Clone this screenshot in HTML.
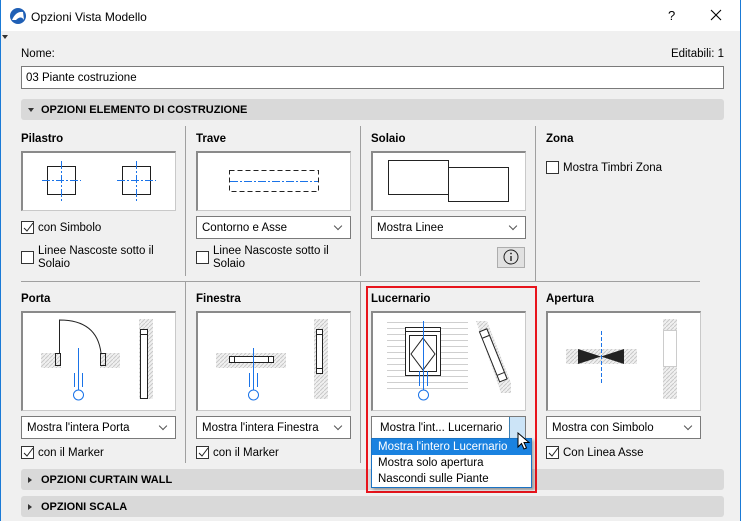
<!DOCTYPE html><html><head><meta charset="utf-8"><style>
*{box-sizing:border-box;margin:0;padding:0}
body{width:741px;height:521px;overflow:hidden;background:#f0f0f0;font-family:"Liberation Sans",sans-serif;font-size:11.5px;color:#000;position:relative}
.a{position:absolute;line-height:16px}
.title{left:0;top:0;width:741px;height:31px;background:#fff}
.bl{left:0;top:0;width:1px;height:521px;background:#1a7ad6}
.br{left:740px;top:0;width:1px;height:521px;background:#1a7ad6}
.sec{left:21px;width:703px;height:21px;background:#d9d9d9;border-radius:3px;font-weight:bold;font-size:11px;padding:3px 0 0 20px}
.sec .t{position:absolute;left:7px;top:8px;width:0;height:0}
.h{font-weight:bold;font-size:11.5px}
.pv{background:#fff;border:1px solid #c9c9c9;border-top:2px solid #8a8a8a;border-left:2px solid #8a8a8a}
.dd{background:#fff;border:1px solid #7a7a7a;height:23px;padding:3px 0 0 5px;font-size:11.5px}
.dd:after{content:"";position:absolute;right:9px;top:6px;width:5px;height:5px;border-right:1px solid #555;border-bottom:1px solid #555;transform:rotate(45deg)}
.cb{width:13px;height:13px;border:1px solid #333;background:#fff}
.vl{width:1px;background:#a0a0a0}
</style></head><body>
<div class="a title"></div>
<svg class="a" style="left:9px;top:7px" width="18" height="18"><circle cx="9" cy="9" r="8" fill="#1f5fb5"/><path d="M3 13 Q7 4 14 5 L15 13 Q12 8 7 13Z" fill="#fff"/></svg>
<div class="a" style="left:31px;top:9px;font-size:12px">Opzioni Vista Modello</div>
<div class="a" style="left:668px;top:8px;font-size:13px">?</div>
<svg class="a" style="left:710px;top:9px" width="12" height="12"><path d="M1 1L11 11M11 1L1 11" stroke="#000" stroke-width="1.1"/></svg>
<div class="a" style="left:2px;top:35px;width:0;height:0;border-left:3px solid transparent;border-right:3px solid transparent;border-top:4px solid #333"></div>
<div class="a bl"></div><div class="a br"></div>

<div class="a" style="left:21px;top:46px">Nome:</div>
<div class="a" style="right:17px;top:46px">Editabili: 1</div>
<div class="a" style="left:21px;top:66px;width:703px;height:23px;background:#fff;border:1px solid #7a7a7a;padding:3px 0 0 4px">03 Piante costruzione</div>

<div class="a sec" style="top:99px"><div class="t" style="border-left:3px solid transparent;border-right:3px solid transparent;border-top:4px solid #333;top:9px"></div>OPZIONI ELEMENTO DI COSTRUZIONE</div>

<div class="a vl" style="left:185px;top:126px;height:150px"></div>
<div class="a vl" style="left:360px;top:126px;height:150px"></div>
<div class="a vl" style="left:535px;top:126px;height:155px"></div>
<div class="a" style="left:21px;top:281px;width:679px;height:1px;background:#a0a0a0"></div>
<div class="a vl" style="left:185px;top:282px;height:181px"></div>
<div class="a vl" style="left:360px;top:282px;height:181px"></div>

<div class="a h" style="left:21px;top:131px">Pilastro</div>
<div class="a pv" style="left:21px;top:151px;width:155px;height:60px"></div>
<svg class="a" style="left:21px;top:151px" width="155" height="60"><g stroke="#1e1e1e" fill="none"><rect x="26.5" y="15.5" width="28" height="28"/><rect x="101.5" y="15.5" width="28" height="28"/></g><g stroke="#1a73e8" stroke-dasharray="8,2,2,2"><path d="M21 29.5H60M40.5 10V50M96 29.5H135M115.5 10V50"/></g></svg>
<div class="a cb" style="left:21px;top:221px"></div><svg class="a" style="left:23px;top:222px" width="11" height="11"><path d="M1 6L4 9L10 1" stroke="#222" fill="none"/></svg>
<div class="a" style="left:38px;top:220px">con Simbolo</div>
<div class="a cb" style="left:21px;top:251px"></div>
<div class="a" style="left:38px;top:245px;line-height:13px">Linee Nascoste sotto il<br>Solaio</div>

<div class="a h" style="left:196px;top:131px">Trave</div>
<div class="a pv" style="left:196px;top:151px;width:155px;height:60px"></div>
<svg class="a" style="left:196px;top:151px" width="155" height="60"><rect x="33.5" y="19.5" width="89" height="21" fill="none" stroke="#222" stroke-dasharray="5,3"/><path d="M34 30.5H122" stroke="#1a73e8" stroke-dasharray="8,2,2,2"/></svg>
<div class="a dd" style="left:196px;top:216px;width:155px">Contorno e Asse</div>
<div class="a cb" style="left:196px;top:251px"></div>
<div class="a" style="left:213px;top:245px;line-height:13px">Linee Nascoste sotto il<br>Solaio</div>

<div class="a h" style="left:371px;top:131px">Solaio</div>
<div class="a pv" style="left:371px;top:151px;width:155px;height:60px"></div>
<svg class="a" style="left:371px;top:151px" width="155" height="60"><g fill="none" stroke="#222"><rect x="17.5" y="9.5" width="60" height="34"/><rect x="77.5" y="16.5" width="60" height="34"/></g></svg>
<div class="a dd" style="left:371px;top:216px;width:155px">Mostra Linee</div>
<div class="a" style="left:497px;top:247px;width:28px;height:21px;background:#e1e1e1;border:1px solid #adadad"></div>
<svg class="a" style="left:503px;top:249px" width="16" height="16"><circle cx="8" cy="8" r="7" fill="none" stroke="#222"/><path d="M8 7V12" stroke="#222" stroke-width="1.4"/><circle cx="8" cy="4.5" r="0.9" fill="#222"/></svg>

<div class="a h" style="left:546px;top:131px">Zona</div>
<div class="a cb" style="left:546px;top:161px"></div>
<div class="a" style="left:563px;top:160px">Mostra Timbri Zona</div>

<div class="a h" style="left:21px;top:291px">Porta</div>
<div class="a pv" style="left:21px;top:311px;width:155px;height:100px"></div>
<svg class="a" style="left:21px;top:311px" width="155" height="100"><defs><pattern id="ht" width="4" height="4" patternUnits="userSpaceOnUse"><rect width="4" height="4" fill="#f0f0f0"/><path d="M0 4L4 0" stroke="#c8c8c8"/></pattern></defs>
<rect x="20" y="42" width="20" height="15" fill="url(#ht)"/><rect x="79" y="42" width="20" height="15" fill="url(#ht)"/>
<g fill="none" stroke="#222"><rect x="34.5" y="42.5" width="5" height="12"/><rect x="79.5" y="42.5" width="5" height="12"/><path d="M38.5 42V9Q76 9 80 42"/></g>
<path d="M57.5 37V88M53.5 62V76M61.5 62V76" stroke="#1a73e8"/><circle cx="57.5" cy="84" r="5" fill="#fff" stroke="#1a73e8"/>
<rect x="118" y="8" width="14" height="80" fill="url(#ht)"/><rect x="119.5" y="18.5" width="7" height="69" fill="#fff" stroke="#222"/><rect x="119.5" y="18.5" width="7" height="5" fill="#fff" stroke="#222"/></svg>
<div class="a dd" style="left:21px;top:416px;width:155px">Mostra l'intera Porta</div>
<div class="a cb" style="left:21px;top:446px"></div><svg class="a" style="left:23px;top:447px" width="11" height="11"><path d="M1 6L4 9L10 1" stroke="#222" fill="none"/></svg>
<div class="a" style="left:38px;top:445px">con il Marker</div>

<div class="a h" style="left:196px;top:291px">Finestra</div>
<div class="a pv" style="left:196px;top:311px;width:155px;height:100px"></div>
<svg class="a" style="left:196px;top:311px" width="155" height="100"><rect x="20" y="42" width="70" height="15" fill="url(#ht)"/><g fill="none" stroke="#222"><rect x="33.5" y="45.5" width="44" height="6" fill="#fff"/><path d="M38.5 46V51M72.5 46V51"/></g>
<path d="M57.5 37V88M53.5 62V76M61.5 62V76" stroke="#1a73e8"/><circle cx="57.5" cy="84" r="5" fill="#fff" stroke="#1a73e8"/>
<rect x="118" y="8" width="14" height="80" fill="url(#ht)"/><rect x="120.5" y="18.5" width="6" height="44" fill="#fff" stroke="#222"/><path d="M121 23.5H126M121 57.5H126" stroke="#222"/></svg>
<div class="a dd" style="left:196px;top:416px;width:155px">Mostra l'intera Finestra</div>
<div class="a cb" style="left:196px;top:446px"></div><svg class="a" style="left:198px;top:447px" width="11" height="11"><path d="M1 6L4 9L10 1" stroke="#222" fill="none"/></svg>
<div class="a" style="left:213px;top:445px">con il Marker</div>

<div class="a h" style="left:371px;top:291px">Lucernario</div>
<div class="a pv" style="left:371px;top:311px;width:155px;height:100px"></div>
<svg class="a" style="left:371px;top:311px" width="155" height="100"><g stroke="#cfcfcf"><path d="M16 11.5H97M16 17.5H97M16 23.5H97M16 29.5H97M16 35.5H97M16 41.5H97M16 47.5H97M16 53.5H97M16 59.5H97M16 65.5H97M16 71.5H97M16 77.5H97"/></g>
<g fill="none" stroke="#222"><rect x="34.5" y="16.5" width="35" height="48" fill="#fff"/><path d="M34.5 20.5H69.5"/><rect x="38.5" y="24.5" width="27" height="36"/><path d="M52 27L64 43L52 59L40 43Z"/></g>
<path d="M52.5 10V88M48.5 60V75M56.5 60V75" stroke="#1a73e8"/><circle cx="52.5" cy="84" r="5" fill="#fff" stroke="#1a73e8"/>
<path d="M105 10H116L140 72V82H130Z" fill="url(#ht)"/><g transform="rotate(-22 122 45)"><rect x="118.5" y="17.5" width="8" height="54" fill="#fff" stroke="#222"/><path d="M119 24.5H126M119 64.5H126" stroke="#222"/></g></svg>
<div class="a dd" style="left:371px;top:416px;width:155px;padding-left:8px">Mostra l'int... Lucernario</div>
<div class="a" style="left:509px;top:417px;width:16px;height:21px;background:#cce4f7;border-left:1px solid #3c7fb1"></div>

<div class="a h" style="left:546px;top:291px">Apertura</div>
<div class="a pv" style="left:546px;top:311px;width:155px;height:100px"></div>
<svg class="a" style="left:546px;top:311px" width="155" height="100"><rect x="20" y="38" width="71" height="15" fill="url(#ht)"/><path d="M32 38V53L55 45.5ZM78 38V53L55 45.5Z" fill="#222"/><path d="M55.5 20V72" stroke="#1a73e8" stroke-dasharray="4,2"/>
<rect x="117" y="8" width="14" height="80" fill="url(#ht)"/><rect x="117.5" y="19.5" width="13" height="36" fill="#fff" stroke="#ccc"/></svg>
<div class="a dd" style="left:546px;top:416px;width:155px">Mostra con Simbolo</div>
<div class="a cb" style="left:546px;top:446px"></div><svg class="a" style="left:548px;top:447px" width="11" height="11"><path d="M1 6L4 9L10 1" stroke="#222" fill="none"/></svg>
<div class="a" style="left:563px;top:445px">Con Linea Asse</div>

<div class="a sec" style="top:469px"><div class="t" style="border-top:3px solid transparent;border-bottom:3px solid transparent;border-left:4px solid #333"></div>OPZIONI CURTAIN WALL</div>
<div class="a sec" style="top:496px"><div class="t" style="border-top:3px solid transparent;border-bottom:3px solid transparent;border-left:4px solid #333"></div>OPZIONI SCALA</div>

<div class="a" style="left:366px;top:286px;width:171px;height:207px;border:2px solid #e8141c"></div>
<div class="a" style="left:371px;top:438px;width:161px;height:50px;background:#fff;border:1px solid #1a73c4;box-shadow:2px 2px 3px rgba(0,0,0,.3)">
<div style="background:#1a82e0;color:#fff;height:16px;padding:0 0 0 6px">Mostra l'intero Lucernario</div>
<div style="height:16px;padding:0 0 0 6px">Mostra solo apertura</div>
<div style="height:16px;padding:0 0 0 6px">Nascondi sulle Piante</div></div>
<svg class="a" style="left:517px;top:432px" width="14" height="20"><path d="M1 1V15L4.5 11.5L7 17L9.5 16L7 10.5H12Z" fill="#fff" stroke="#000"/></svg>
</body></html>
